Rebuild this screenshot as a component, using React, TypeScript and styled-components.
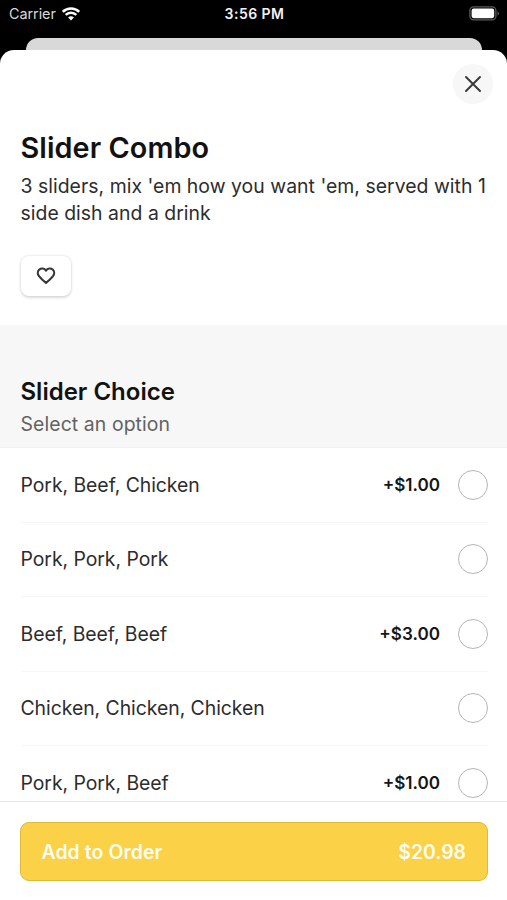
import React from "react";
import styled, { createGlobalStyle } from "styled-components";

const GlobalStyle = createGlobalStyle`
  *, *::before, *::after { box-sizing: border-box; }
  body { margin: 0; background: #000; font-family: Inter, "Liberation Sans", sans-serif; }
  button { font: inherit; }
  h1, h2, p, ul { margin: 0; padding: 0; }
`;

const Screen = styled.div`
  display: flex;
  flex-direction: column;
  width: 507px;
  height: 900px;
  overflow: hidden;
  background: #000;
`;

const StatusBar = styled.header`
  display: grid;
  grid-template-columns: 1fr auto 1fr;
  align-items: center;
  flex: none;
  height: 38px;
  padding: 0 7px 11px 9px;
  color: #f2f2f2;
`;

const Carrier = styled.div`
  display: flex;
  align-items: center;
  gap: 6px;
  font-size: 14.4px;
  letter-spacing: -0.05px;
  color: #d8d8d8;
`;

const Clock = styled.div`
  font-size: 14px;
  font-weight: 600;
  letter-spacing: 0.45px;
`;

const BatterySlot = styled.div`
  display: flex;
  justify-content: flex-end;
`;

const SheetBehind = styled.div`
  flex: none;
  height: 12px;
  margin: 0 25px 0 25.5px;
  border-radius: 12px 12px 0 0;
  background: #d9d9d9;
`;

const Sheet = styled.main`
  display: flex;
  flex-direction: column;
  flex: 1;
  min-height: 0;
  overflow: hidden;
  border-radius: 14px 14px 0 0;
  background: #fff;
`;

const SheetTop = styled.div`
  display: flex;
  justify-content: flex-end;
  flex: none;
  height: 80px;
  padding: 14px 14.5px 0;
`;

const CloseButton = styled.button`
  display: grid;
  place-items: center;
  width: 39.5px;
  height: 39.5px;
  padding: 0;
  border: 0;
  border-radius: 50%;
  background: #f7f7f7;
`;

const Intro = styled.section`
  flex: none;
  height: 195px;
  padding: 0 18px 0 20.5px;
`;

const Title = styled.h1`
  font-size: 28.8px;
  line-height: 36px;
  font-weight: 600;
  letter-spacing: 0.08px;
  color: #121212;
`;

const Description = styled.p`
  margin-top: 7px;
  font-size: 19.4px;
  line-height: 27px;
  letter-spacing: 0.03px;
  color: #2c2c2c;
`;

const FavoriteButton = styled.button`
  display: grid;
  place-items: center;
  width: 50px;
  height: 40px;
  margin-top: 29px;
  padding: 0;
  border: 0;
  border-radius: 8px;
  background: #fff;
  box-shadow: 0 0 3px rgba(0, 0, 0, 0.12), 0 1.5px 3px rgba(0, 0, 0, 0.12);
`;

const GroupHeader = styled.section`
  flex: none;
  height: 123px;
  padding: 51px 20.5px 0;
  border-bottom: 1px solid #f1f1f1;
  background: #f7f7f7;
`;

const GroupTitle = styled.h2`
  font-size: 24px;
  line-height: 32px;
  font-weight: 600;
  color: #121212;
`;

const GroupHint = styled.p`
  margin-top: 3px;
  font-size: 19.4px;
  line-height: 26px;
  letter-spacing: 0.1px;
  color: #626262;
`;

const Options = styled.ul`
  flex: 1;
  min-height: 0;
  overflow: hidden;
  padding: 0 19px 0 20.5px;
  list-style: none;
`;

const Option = styled.li`
  display: flex;
  align-items: center;
  height: 74.5px;
  border-bottom: 1.5px solid #f6f6f6;
`;

const OptionName = styled.span`
  flex: 1;
  font-size: 19.4px;
  letter-spacing: -0.04px;
  color: #2c2c2c;
`;

const OptionPrice = styled.span`
  margin-right: 18px;
  font-size: 17.1px;
  font-weight: 600;
  color: #161616;
`;

const Radio = styled.span`
  width: 30px;
  height: 30px;
  border: 1.4px solid #b5b5b5;
  border-radius: 50%;
`;

const Footer = styled.footer`
  flex: none;
  height: 99px;
  padding: 20px 19px 0 20px;
  border-top: 1px solid #e7e7e7;
  background: #fff;
`;

const OrderButton = styled.button`
  display: flex;
  align-items: center;
  justify-content: space-between;
  width: 100%;
  height: 59px;
  padding: 0 21px 0 20.5px;
  border: 1.5px solid #dfb938;
  border-radius: 9px;
  background: #fad147;
  color: #fffdf2;
  font-size: 19.4px;
  font-weight: 600;
`;

const OrderLabel = styled.span`
  letter-spacing: 0.1px;
`;

const OrderTotal = styled.span`
  letter-spacing: 0;
`;

const options = [
  { name: "Pork, Beef, Chicken", price: "+$1.00" },
  { name: "Pork, Pork, Pork" },
  { name: "Beef, Beef, Beef", price: "+$3.00" },
  { name: "Chicken, Chicken, Chicken" },
  { name: "Pork, Pork, Beef", price: "+$1.00" },
];

const WifiIcon = () => (
  <svg width="18" height="14" viewBox="0 0 18 14" fill="none" stroke="#fff" strokeWidth="2.5">
    <path d="M.8 4.8a11.6 11.6 0 0 1 16.4 0" />
    <path d="M3.7 7.9a7.5 7.5 0 0 1 10.6 0" />
    <path d="M9 13.5 6.1 10.6a4.1 4.1 0 0 1 5.8 0Z" fill="#fff" stroke="none" />
  </svg>
);

const BatteryIcon = () => (
  <svg width="31" height="15" viewBox="0 0 31 15">
    <rect x=".9" y=".9" width="26" height="13" rx="3.8" fill="none" stroke="#5c5c5c" strokeWidth="1.3" />
    <rect x="2.6" y="2.6" width="22.6" height="9.6" rx="2.1" fill="#fff" />
    <path d="M28.5 5.2q3.2 2.3 0 4.6Z" fill="#5c5c5c" />
  </svg>
);

const CloseIcon = () => (
  <svg width="18" height="18" viewBox="0 0 18 18" stroke="#3b3b3b" strokeWidth="2" strokeLinecap="round">
    <path d="m2 2 14 14M16 2 2 16" />
  </svg>
);

const HeartIcon = () => (
  <svg width="20" height="18" viewBox="0 0 20 18" fill="none" stroke="#373737" strokeWidth="2.1" strokeLinejoin="round">
    <path d="M10 3.6C8.4 1.2 5.3.9 3.3 2.6 1.4 4.4 1.4 7.2 3 9.2c1.6 2.1 4.2 4.5 7 6.7 2.8-2.2 5.4-4.6 7-6.7 1.6-2 1.6-4.8-.3-6.6C14.7.9 11.6 1.2 10 3.6Z" />
  </svg>
);

export default function App() {
  return (
    <Screen>
      <GlobalStyle />
      <StatusBar>
        <Carrier>
          Carrier
          <WifiIcon />
        </Carrier>
        <Clock>3:56 PM</Clock>
        <BatterySlot>
          <BatteryIcon />
        </BatterySlot>
      </StatusBar>
      <SheetBehind />
      <Sheet>
        <SheetTop>
          <CloseButton aria-label="Close">
            <CloseIcon />
          </CloseButton>
        </SheetTop>
        <Intro>
          <Title>Slider Combo</Title>
          <Description>
            3 sliders, mix 'em how you want 'em, served with 1 side dish and a drink
          </Description>
          <FavoriteButton aria-label="Add to favorites">
            <HeartIcon />
          </FavoriteButton>
        </Intro>
        <GroupHeader>
          <GroupTitle>Slider Choice</GroupTitle>
          <GroupHint>Select an option</GroupHint>
        </GroupHeader>
        <Options>
          {options.map((option) => (
            <Option key={option.name}>
              <OptionName>{option.name}</OptionName>
              {option.price && <OptionPrice>{option.price}</OptionPrice>}
              <Radio />
            </Option>
          ))}
        </Options>
        <Footer>
          <OrderButton>
            <OrderLabel>Add to Order</OrderLabel>
            <OrderTotal>$20.98</OrderTotal>
          </OrderButton>
        </Footer>
      </Sheet>
    </Screen>
  );
}
